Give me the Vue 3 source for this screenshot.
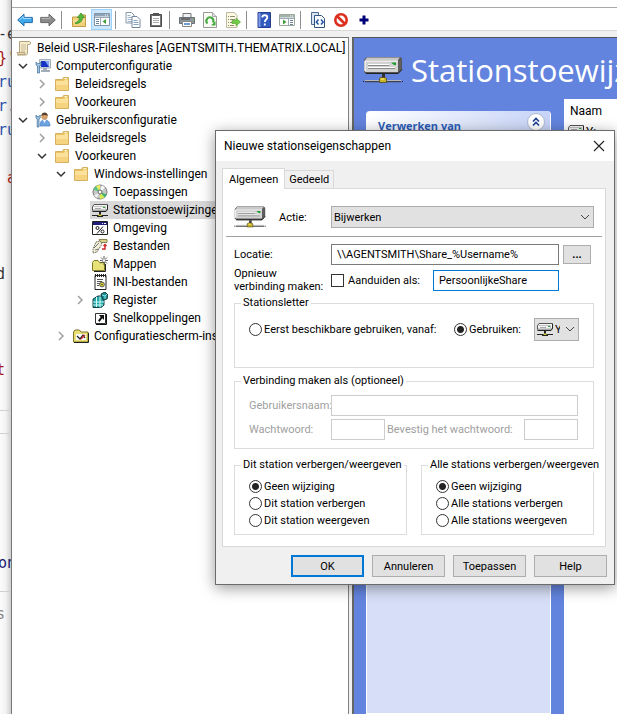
<script setup>
import { ref } from 'vue'

const codeTop = ['-e', "}'", 'ru', 'r.', 'ru', '', ' a', '', '', '', 'd', '', '', '', 't']
const codeTone = ['ink', 'red', 'blue', 'blue', 'blue', '', 'red', '', '', '', 'ink cut', '', '', '', 'red cut']

const tools = ref([
  { icon: 'back', label: 'Vorige' },
  { icon: 'forward', label: 'Volgende' },
  null,
  { icon: 'up', label: 'Niveau omhoog' },
  { icon: 'console', label: 'Consolestructuur', on: true },
  null,
  { icon: 'copy', label: 'Kopiëren' },
  { icon: 'paste', label: 'Plakken' },
  null,
  { icon: 'print', label: 'Afdrukken' },
  { icon: 'refresh', label: 'Vernieuwen' },
  { icon: 'export', label: 'Exporteren' },
  null,
  { icon: 'help', label: 'Help' },
  { icon: 'pane', label: 'Actievenster' },
  null,
  { icon: 'xml', label: 'XML weergeven' },
  { icon: 'ban', label: 'Uitschakelen' },
  { icon: 'plus', label: 'Toevoegen' }
])

const tree = [
  { level: 0, icon: 'scroll', text: 'Beleid USR-Fileshares [AGENTSMITH.THEMATRIX.LOCAL]' },
  { level: 1, icon: 'computer', text: 'Computerconfiguratie', state: 'open' },
  { level: 2, icon: 'folder', text: 'Beleidsregels', state: 'closed' },
  { level: 2, icon: 'folder', text: 'Voorkeuren', state: 'closed' },
  { level: 1, icon: 'user', text: 'Gebruikersconfiguratie', state: 'open' },
  { level: 2, icon: 'folder', text: 'Beleidsregels', state: 'closed' },
  { level: 2, icon: 'folder', text: 'Voorkeuren', state: 'open' },
  { level: 3, icon: 'folder', text: 'Windows-instellingen', state: 'open' },
  { level: 4, icon: 'disc', text: 'Toepassingen' },
  { level: 4, icon: 'drive', text: 'Stationstoewijzingen', selected: true },
  { level: 4, icon: 'env', text: 'Omgeving' },
  { level: 4, icon: 'files', text: 'Bestanden' },
  { level: 4, icon: 'newfolder', text: 'Mappen' },
  { level: 4, icon: 'ini', text: 'INI-bestanden' },
  { level: 4, icon: 'registry', text: 'Register', state: 'closed' },
  { level: 4, icon: 'shortcut', text: 'Snelkoppelingen' },
  { level: 3, icon: 'control', text: 'Configuratiescherm-instellingen', state: 'closed' }
]

const action = ref('Bijwerken')
const location = ref('\\\\AGENTSMITH\\Share_%Username%')
const shareLabel = ref('PersoonlijkeShare')
const reconnect = ref(false)
const letterMode = ref('use')
const letter = ref('Y')
const hideThis = ref('Geen wijziging')
const hideAll = ref('Geen wijziging')
const thisOptions = ['Geen wijziging', 'Dit station verbergen', 'Dit station weergeven']
const allOptions = ['Geen wijziging', 'Alle stations verbergen', 'Alle stations weergeven']
</script>

<template>
  <svg class="defs" aria-hidden="true">
    <symbol id="i-back" viewBox="0 0 16 16"><path d="M.7 8 7 2.200V5.400h8.300v5.200H7v3.200z" fill="#3fa9ec" stroke="#2269a8" /><path d="M2.500 7.800 6.200 4.400v2h8" fill="none" stroke="#a5ddff" /></symbol>
    <symbol id="i-forward" viewBox="0 0 16 16"><path d="M15.300 8 9 2.200v3.200H.7v5.200H9v3.200z" fill="#8b8b8b" stroke="#666" /><path d="M1.500 6.400h8.300v-2" fill="none" stroke="#bbb" /></symbol>
    <symbol id="i-up" viewBox="0 0 16 16"><path d="M1.500 5h8l1-2h4v11.500h-13z" fill="#f1d27c" stroke="#c29b45" /><path d="M2 9h12" stroke="#fbe9ae" /><path d="M4 11c3-1 4.500-3 4.500-5.500H6.300L10 1l3.700 4.500h-2.200c0 4-3 6-7 6z" fill="#56b83a" stroke="#2f8a25" stroke-width=".7" /></symbol>
    <symbol id="i-console" viewBox="0 0 16 16"><path d="M.5 1.500h15v12H.5z" fill="#fff" stroke="#8095a8" /><path d="M1 2h14v2.500H1z" fill="#8fa4b6" /><path d="M11 3h1m1 0h1" stroke="#fff" /><path d="M1 5.500h14M6.500 6v7" stroke="#9aaaba" /><path d="M2 7.500h3M2 9.500h3M2 11.500h3" stroke="#6d8496" /><path d="M12 7v5L8.500 9.500z" fill="#3d9d37" /></symbol>
    <symbol id="i-pane" viewBox="0 0 16 16"><path d="M.5 2.500h15v11H.5z" fill="#fff" stroke="#9aa89e" /><path d="M1 3h14v2.500H1z" fill="#a3b3ab" /><path d="M11 4h1m1 0h1" stroke="#fff" /><path d="M1 6.500h14M9.500 7v6" stroke="#9aaaba" /><path d="M11 8.500h3M11 10.500h3M11 12.500h3" stroke="#6d8496" /><path d="M4 7.500v5L7.500 10z" fill="#3d9d37" /></symbol>
    <symbol id="i-copy" viewBox="0 0 16 16"><path d="M1 .5h5.500l2.500 2.500v8H1z" fill="#fff" stroke="#8797a8" /><path d="M2.500 3.500h3M2.500 5.500h5M2.500 7.500h5M2.500 9.500h5" stroke="#9cb4cc" /><path d="M7 4.500h5l3 3v8H7z" fill="#fff" stroke="#7587a0" /><path d="M8.500 8.500h4M8.500 10.500h5M8.500 12.500h5" stroke="#7ca0c8" /></symbol>
    <symbol id="i-paste" viewBox="0 0 16 16"><path d="M2.500 2.500h11v12h-11z" fill="#777" stroke="#4c4c4c" /><path d="M4 4h8v9H4z" fill="#fff" /><path d="M5 1h6v3H5z" fill="#555" /><path d="M5 6.500h6M5 8.500h6M5 10.500h6" stroke="#aaa" /></symbol>
    <symbol id="i-print" viewBox="0 0 16 16"><path d="M4 1.500h8v5H4z" fill="#eef2f5" stroke="#777" /><path d="M.5 5.500h15v6H.5z" fill="#8e959b" stroke="#6b7075" /><path d="M2 7h9" stroke="#444" /><path d="M13 7.500h1" stroke="#61cf54" /><path d="M3.500 9.500h9v5h-9z" fill="#fff" stroke="#888" /><path d="M5 12h6" stroke="#6c9ed0" stroke-width="2" /></symbol>
    <symbol id="i-refresh" viewBox="0 0 16 16"><path d="M1.500.5h9l4 4v11h-13z" fill="#fcfcf7" stroke="#9b9b93" /><path d="M10.500.5v4h4" fill="#ddd" stroke="#aaa" /><path d="M5.500 11.500A3.500 3.500 0 1 1 11 10.500" fill="none" stroke="#43a93c" stroke-width="2" /><path d="M13.500 9v4.500H9z" fill="#43a93c" /></symbol>
    <symbol id="i-export" viewBox="0 0 16 16"><path d="M1.500.5h8l2.500 3v12H1.500z" fill="#fdf9e2" stroke="#bdb8a2" /><path d="M3 4.500h1m1 0h5M3 7.500h1m1 0h5M3 10.500h1m1 0h3M3 13.500h1m1 0h4" stroke="#8b8d72" /><path d="M7 8.500h4V6l4.500 4-4.500 4v-2.500H7z" fill="#72cc46" stroke="#4c9d2d" stroke-width=".6" /></symbol>
    <symbol id="i-help" viewBox="0 0 16 16"><path d="M2 .5h12.500v15H2z" fill="#3259bd" stroke="#243f91" /><path d="M2.500 1h2v14h-2z" fill="#7e9be4" /><path d="M6.300 5.500c0-3 5-3 5 0 0 2-2.500 2-2.500 4.500M8.800 11.500v2" fill="none" stroke="#fff" stroke-width="1.800" /></symbol>
    <symbol id="i-xml" viewBox="0 0 16 16"><path d="M1.500.5h7v12h-7z" fill="#d7e5f4" stroke="#4d6c91" /><path d="M4.500 3.500h7l3 3v9h-10z" fill="#f9fcff" stroke="#33557f" /><path d="M8.500 7.500 6.300 10l2.200 2.500M11 7.500l2.200 2.500-2.200 2.500" fill="none" stroke="#1c4fa0" stroke-width="1.400" /></symbol>
    <symbol id="i-ban" viewBox="0 0 16 16"><circle cx="8" cy="8" r="5.700" fill="#fff" stroke="#dc2f1e" stroke-width="2.600" /><path d="m4 4 8 8" stroke="#dc2f1e" stroke-width="2.600" /></symbol>
    <symbol id="i-plus" viewBox="0 0 16 16"><path d="M8 3.500v9M3.500 8h9" stroke="#00007b" stroke-width="3" /></symbol>
    <symbol id="i-scroll" viewBox="0 0 16 16"><path d="M3.500 1.500h10c1.500 0 1.500 3 0 3h-2v8.500c0 1.500-1 2-2 2h-8c1.500 0 2-1 2-2z" fill="#f5ecd0" stroke="#b5a27c" /><path d="M1 12.500h8v2H2z" fill="#e7d7aa" stroke="#a4916a" stroke-width=".7" /><path d="M5 5h5M5 7h5M5 9h5M5 11h4" stroke="#cbbb95" /></symbol>
    <symbol id="i-computer" viewBox="0 0 16 16"><path d="M4.500 1.500h11v8.500h-11z" fill="#d5dde7" stroke="#a3adba" /><path d="M6 3h8v6H6z" fill="#1934c4" /><path d="M10 3h4v6z" fill="#7fa4f1" /><path d="M8 10h4v2H8zM6 12h9v2H6z" fill="#a4adba" /><path d="M1 4v3l1.500 1v7h2V8L6 7V4L4.500 5.500h-2z" fill="#9fc2e2" stroke="#3e6d9b" stroke-width=".7" /></symbol>
    <symbol id="i-user" viewBox="0 0 16 16"><circle cx="9.500" cy="4.500" r="3.200" fill="#d9a06b" /><path d="M6.500 4c-.5-4 6-5 6.300 0-2-1-4-1.500-6.300 0z" fill="#54402d" /><path d="M5 14c0-5 2-6 4.500-6s5.500 1 5.500 6z" fill="#6ba2e0" stroke="#4a7fbb" stroke-width=".7" /><path d="M8 8h3l-1.500 3z" fill="#fff" /><path d="M1 3v3l1.200 1v8h1.800V7l1.200-1V3L4 4.500H2.200z" fill="#9fc2e2" stroke="#3e6d9b" stroke-width=".7" /></symbol>
    <symbol id="i-folder" viewBox="0 0 16 16"><path d="M1.500 3.500h7l1-2h5v13h-13z" fill="#e9c566" stroke="#d6b05f" /><path d="M2 5h8l1-1.500h3V14H2z" fill="#fbe19a" /><path d="M2 9h12v5H2z" fill="#f5d37f" /><path d="M10.500 2.500H13" stroke="#fff6d5" /></symbol>
    <symbol id="i-disc" viewBox="0 0 16 16"><circle cx="8" cy="8" r="7" fill="#c5c9c5" stroke="#777" /><path d="M8 8 4 2.300A7 7 0 0 1 8 1z" fill="#e7ef58" /><path d="M8 8 1.500 5.500A7 7 0 0 1 4 2.300z" fill="#56c784" /><path d="m8 8 4.500 5.300A7 7 0 0 1 8 15z" fill="#d9ec4c" /><path d="m8 8 6.500 2.500a7 7 0 0 1-2 2.800z" fill="#38b46b" /><path d="M8 8 10 1.300 13 3.500z" fill="#fff" /><path d="M8 8 4.500 14 2 11.500z" fill="#eee" /><circle cx="8" cy="8" r="2" fill="#fff" stroke="#666" /></symbol>
    <symbol id="i-drive" viewBox="0 0 16 16"><path d="M.5 4.500 2 2.500h13.500V7L14 8.500H.5z" fill="#f4f4f4" stroke="#555" /><path d="M1 7.500h13V9H1z" fill="#a9a9a9" /><path d="M1 4.500h12.500V8" fill="none" stroke="#c4c4c4" /><path d="M.5 9.500h13.500l1.500-2V3" fill="none" stroke="#222" /><path d="M3 6.500h6" stroke="#aaa" /><path d="M11 5.500h2" stroke="#24a238" /><path d="M8 10v3" stroke="#222" stroke-width="2" /><path d="M0 13.500h16" stroke="#222" /><path d="M5 14.500h6" stroke="#222" /><path d="M6.500 12.500h3v1.500h-3z" fill="#d6cc37" /></symbol>
    <symbol id="i-bigdrive" viewBox="0 0 40 28"><path d="M4 1h33l2 1.500v11L35 18H3l-2-2V4z" fill="#555" /><path d="M4 1.500h33l-2.500 3H2z" fill="#c9c9c9" /><path d="m38 2.500-3 2.500v11l3-3z" fill="#5f5f5f" /><path d="M1.500 4.500H35V16H2.500l-1-1z" fill="#d2d2d2" /><path d="M2 15V5h33" fill="none" stroke="#fff" /><path d="M5 8.500h21M5 11.500h27" stroke="#fff" /><path d="M5 9.500h21M5 12.500h27" stroke="#8a8a8a" /><path d="M3 17.500h32l4-4" fill="none" stroke="#222" /><path d="M28 6.500h5V9h-2z" fill="#1d9c2d" /><path d="M19 18h3v4h-3z" fill="#333" /><path d="M0 25.500h1m38 0h1" stroke="#222" /><path d="M2 24.500h36" stroke="#b8b8b8" /><path d="M2 25.700h36" stroke="#333" /><path d="M17.500 21.500h5l1 1v4h-7v-4z" fill="#c9b429" stroke="#473f18" stroke-width=".7" /><path d="M18 23h3" stroke="#fff17a" /></symbol>
    <symbol id="i-env" viewBox="0 0 16 16"><path d="M.5 1.500h15v13H.5z" fill="#fff" stroke="#222" /><path d="M1 2h14v3H1z" fill="#20207c" /><path d="M10 3.500h1m1 0h2" stroke="#fff" /><circle cx="5.500" cy="8" r="1.500" fill="none" stroke="#222" /><circle cx="10.500" cy="11.500" r="1.500" fill="none" stroke="#222" /><path d="m11 6.500-6 7" stroke="#222" /></symbol>
    <symbol id="i-files" viewBox="0 0 16 16"><path d="M7 1.500h8v3H9z" fill="#d6d18d" stroke="#8a8550" /><path d="m4 4 4-1 2 3-5 8-4 1v-4z" fill="#f1efd9" stroke="#6e6c51" stroke-dasharray="1.500 .7" /><path d="m2 10 5-5M3 12l4-1" stroke="#777" /><path d="M10 11h3V7m-1.500 1L13 6.500 14.500 8" fill="none" stroke="#d12626" stroke-width="1.400" /></symbol>
    <symbol id="i-newfolder" viewBox="0 0 16 16"><path d="M.5 14.500V6.500l1.500-2h4l1.500 2h5v8z" fill="#e6e278" stroke="#7e7a29" /><path d="M2 15.500h11.500V8" fill="none" stroke="#222" /><path d="M12 0v9M8 4.500h8M9 1.500l6 6M15 1.500l-6 6" stroke="#333" stroke-width=".8" /><circle cx="12" cy="4.500" r="1.300" fill="#fff" /></symbol>
    <symbol id="i-ini" viewBox="0 0 16 16"><path d="M3 1.500h11v14H3z" fill="#fff" stroke="#222" /><path d="M3 1.500h11" stroke="#222" stroke-width="3" stroke-dasharray="1 1" /><path d="M5 5.500h6M5 7.500h5M5 9.500h3M5 11.500h2" stroke="#555" /><circle cx="10" cy="10.500" r="2.400" fill="#e5d93c" stroke="#555" /><circle cx="10" cy="10.500" r=".8" fill="#333" /></symbol>
    <symbol id="i-registry" viewBox="0 0 16 16"><path d="m1 7 5-3h5l1 4v5l-3 2.500H1z" fill="#26a5a5" stroke="#123f46" /><path d="M1 10h11M1 13h10M4.500 5v10M8 4.500v11" stroke="#d1fafa" /><path d="m9 2 4-2 3 3-1 4-4 1z" fill="#178c91" stroke="#123f46" /><path d="m10 3 3 1 2-2M13 4v3" fill="none" stroke="#8de2e2" /></symbol>
    <symbol id="i-shortcut" viewBox="0 0 16 16"><path d="M3.500 3.500h10v10h-10z" fill="#fff" stroke="#333" /><path d="M4 14.500h10.500V4" fill="none" stroke="#111" /><path d="M7 5h5v5l-1.700-1.700L7.500 12 6 10.500 8.700 7z" fill="#111" /></symbol>
    <symbol id="i-control" viewBox="0 0 16 16"><path d="M.5 4 2 2h4.500L8 4h7v10H.5z" fill="#e9df75" stroke="#80762a" /><path d="M1 14.500h14.500V5" fill="none" stroke="#222" /><path d="M3 6h10v6H3z" fill="#fff" /><path d="m4 8 3 3 3-4 2 3" fill="none" stroke="#222" stroke-width="1.300" /><path d="m8 11 4-4" stroke="#d13333" stroke-width="1.500" /></symbol>
  </svg>

  <div class="desktop">
    <div class="editor" aria-hidden="true">
      <pre v-for="(line, i) in codeTop" :key="i" :class="codeTone[i]">{{ line }}</pre>
      <div class="cell first"></div>
      <div class="cell second"></div>
      <pre class="navy">on</pre>
      <div class="cell third"></div>
      <pre class="grey cut">s</pre>
    </div>

    <main class="window">
      <div class="menustrip"></div>
      <div class="toolbar" role="toolbar">
        <template v-for="(t, i) in tools" :key="i">
          <button v-if="t" type="button" :class="['tool', { on: t.on }]" :aria-label="t.label">
            <svg class="ico"><use :href="'#i-' + t.icon" /></svg>
          </button>
          <span v-else class="sep"></span>
        </template>
      </div>

      <div class="panes">
        <nav class="tree">
          <div v-for="(n, i) in tree" :key="i" :class="['node', 'level' + n.level]">
            <span v-if="n.level" class="twist">
              <svg v-if="n.state === 'open'" class="chev open" viewBox="0 0 10 10"><path d="m1 3 4 4 4-4" /></svg>
              <svg v-else-if="n.state === 'closed'" class="chev" viewBox="0 0 10 10"><path d="m3 1 4 4-4 4" /></svg>
            </span>
            <span :class="['item', { selected: n.selected }]">
              <svg class="ico"><use :href="'#i-' + n.icon" /></svg>
              <span>{{ n.text }}</span>
            </span>
          </div>
        </nav>

        <section class="detail">
          <header class="banner">
            <svg class="bannerico"><use href="#i-bigdrive" /></svg>
            <h1>Stationstoewijzingen</h1>
          </header>
          <div class="columns">
            <aside class="card">
              <div class="cardhead">
                <h2>Verwerken van</h2>
                <button type="button" class="fold" aria-label="Samenvouwen">
                  <svg viewBox="0 0 16 16"><path d="m5 7.500 3-3 3 3m-6 4 3-3 3 3" /></svg>
                </button>
              </div>
            </aside>
            <div class="list">
              <div class="listhead">Naam</div>
              <div class="listrow"><svg class="ico"><use href="#i-drive" /></svg>Y:</div>
            </div>
          </div>
        </section>
      </div>
    </main>

    <div class="dialog" role="dialog" aria-labelledby="dlg-title">
      <div class="titlebar">
        <span id="dlg-title">Nieuwe stationseigenschappen</span>
        <button type="button" class="close" aria-label="Sluiten">
          <svg viewBox="0 0 12 12"><path d="m1 1 10 10M11 1 1 11" /></svg>
        </button>
      </div>

      <form class="body" @submit.prevent>
        <div class="tabs" role="tablist">
          <button type="button" role="tab" class="tab active" aria-selected="true">Algemeen</button>
          <button type="button" role="tab" class="tab" aria-selected="false">Gedeeld</button>
        </div>

        <div class="sheet" role="tabpanel">
          <div class="row action">
            <svg class="driveico"><use href="#i-bigdrive" /></svg>
            <label for="action">Actie:</label>
            <span class="combo">
              <select id="action" v-model="action"><option>Bijwerken</option></select>
              <svg class="arrow" viewBox="0 0 10 10"><path d="m1 3 4 4 4-4" /></svg>
            </span>
          </div>
          <hr />
          <div class="row place">
            <label for="location" class="lead">Locatie:</label>
            <input id="location" v-model="location" type="text" class="box" />
            <button type="button" class="btn more" aria-label="Bladeren">...</button>
          </div>
          <div class="row share">
            <label for="reconnect" class="lead">Opnieuw<br />verbinding maken:</label>
            <input id="reconnect" v-model="reconnect" type="checkbox" class="check" />
            <label for="share" class="as">Aanduiden als:</label>
            <input id="share" v-model="shareLabel" type="text" class="box focus" />
          </div>

          <fieldset class="letter">
            <legend>Stationsletter</legend>
            <label class="opt"><input v-model="letterMode" type="radio" name="letter" value="first" />Eerst beschikbare gebruiken, vanaf:</label>
            <label class="opt"><input v-model="letterMode" type="radio" name="letter" value="use" />Gebruiken:</label>
            <span class="combo small">
              <svg class="ico inside"><use href="#i-drive" /></svg>
              <select v-model="letter" aria-label="Stationsletter"><option>Y</option></select>
              <svg class="arrow" viewBox="0 0 10 10"><path d="m1 3 4 4 4-4" /></svg>
            </span>
          </fieldset>

          <fieldset class="account" disabled>
            <legend>Verbinding maken als (optioneel)</legend>
            <label for="user">Gebruikersnaam:</label>
            <input id="user" type="text" class="box wide" />
            <label for="pw">Wachtwoord:</label>
            <input id="pw" type="password" class="box" />
            <label for="pw2" class="confirm">Bevestig het wachtwoord:</label>
            <input id="pw2" type="password" class="box" />
          </fieldset>

          <div class="pair">
            <fieldset class="hide">
              <legend>Dit station verbergen/weergeven</legend>
              <label v-for="o in thisOptions" :key="o" class="opt"><input v-model="hideThis" type="radio" name="this" :value="o" />{{ o }}</label>
            </fieldset>
            <fieldset class="hide">
              <legend>Alle stations verbergen/weergeven</legend>
              <label v-for="o in allOptions" :key="o" class="opt"><input v-model="hideAll" type="radio" name="all" :value="o" />{{ o }}</label>
            </fieldset>
          </div>
        </div>

        <div class="actions">
          <button type="submit" class="btn primary">OK</button>
          <button type="button" class="btn">Annuleren</button>
          <button type="button" class="btn">Toepassen</button>
          <button type="button" class="btn">Help</button>
        </div>
      </form>
    </div>
  </div>
</template>

<style>
body {
  margin: 0;
  overflow: hidden;
}
</style>

<style scoped>
* {
  box-sizing: border-box;
}
.defs {
  display: none;
}
.desktop {
  position: relative;
  display: grid;
  grid-template-columns: 11px minmax(0, 1fr);
  height: 100vh;
  overflow: hidden;
  font: 12px/18px Roboto, "Open Sans", sans-serif;
  color: #000;
}
.ico {
  display: block;
  flex: none;
  width: 16px;
  height: 16px;
}
button,
input,
select {
  font: inherit;
  color: inherit;
  margin: 0;
}

/* editor behind the window */
.editor {
  overflow: hidden;
  padding-top: 22px;
  background: linear-gradient(to right, #fbfbfb, #f3f3f3 50%, #cfcfcf);
}
.editor pre {
  height: 24px;
  margin: 0 0 0 -2px;
  font: 15px/24px "DejaVu Sans Mono", monospace;
}
.editor pre.cut {
  margin-left: -4px;
}
.ink { color: #333; }
.red { color: #a31515; }
.blue { color: #2b50a8; }
.navy { color: #1a1a70; }
.grey { color: #888; }
.cell {
  border-top: 1px solid #d0d0d0;
}
.first {
  height: 23px;
  margin-top: 28px;
}
.second {
  height: 118px;
}
.third {
  height: 11px;
  margin-top: 16px;
}

/* console window */
.window {
  display: flex;
  flex-direction: column;
  min-width: 0;
  border-left: 1px solid #777;
  background: #f0f0f0;
}
.menustrip {
  height: 8px;
  background: #fff;
  border-bottom: 1px solid #a8a8a8;
}
.toolbar {
  display: flex;
  align-items: center;
  gap: 2px;
  height: 23px;
  padding: 1px 0 0 2px;
  background: #fff;
  border-bottom: 1px solid #d8d8d8;
}
.tool {
  display: flex;
  align-items: center;
  justify-content: center;
  width: 21px;
  height: 21px;
  padding: 0;
  border: 1px solid transparent;
  background: none;
}
.tool.on {
  background: #cce6fb;
  border-color: #99d1ff;
}
.sep {
  width: 6px;
  height: 18px;
  background: linear-gradient(#8d8d8d, #8d8d8d) 1px 0 / 1px 100% no-repeat;
}
.panes {
  display: grid;
  grid-template-columns: 337px minmax(0, 1fr);
  gap: 3px;
  flex: 1;
  min-height: 0;
  margin-top: 6px;
}
.tree {
  overflow: hidden;
  padding-top: 1px;
  background: #fff;
  border-top: 1px solid #777;
  border-right: 1px solid #828282;
}
.node {
  display: flex;
  height: 18px;
  white-space: nowrap;
}
.level0 { padding-left: 2px; }
.level1 { padding-left: 2px; }
.level2 { padding-left: 21px; }
.level3 { padding-left: 40px; }
.level4 { padding-left: 59px; }
.twist {
  display: flex;
  align-items: center;
  width: 19px;
  padding-left: 4px;
  flex: none;
}
.chev {
  width: 10px;
  height: 10px;
  fill: none;
  stroke: #a0a0a0;
  stroke-width: 1.5;
}
.chev.open {
  stroke: #333;
}
.item {
  display: flex;
  align-items: center;
  gap: 5px;
  padding: 0 3px 0 2px;
}
.item.selected {
  background: #d9d9d9;
}

.detail {
  display: flex;
  flex-direction: column;
  min-width: 0;
  overflow: hidden;
  background: #6384de;
  border-top: 1px solid #555;
  border-left: 2px solid #666;
}
.banner {
  display: flex;
  align-items: center;
  gap: 8px;
  height: 61px;
  padding: 2px 0 0 9px;
  flex: none;
}
.bannerico {
  width: 40px;
  height: 28px;
  flex: none;
}
h1 {
  margin: 0;
  font: 31px/40px "Open Sans", sans-serif;
  color: #fff;
}
.columns {
  display: grid;
  grid-template-columns: 185px minmax(0, 1fr);
  gap: 13px;
  flex: 1;
  padding-left: 12px;
}
.card {
  margin-top: 12px;
  background: #d6dff7;
  border: 1px solid #fff;
  border-top: 0;
  border-radius: 4px 4px 0 0;
}
.cardhead {
  display: flex;
  align-items: center;
  justify-content: space-between;
  height: 25px;
  padding: 0 5px 3px 11px;
  border-radius: 4px 4px 0 0;
  background: linear-gradient(to right, #fff, #c6d3f7);
}
h2 {
  margin: 0;
  padding-top: 7px;
  font: bold 11px/16px "Open Sans", sans-serif;
  color: #2a5bb8;
}
.fold {
  display: flex;
  width: 18px;
  height: 18px;
  padding: 0;
  border: 1px solid #b0b8d0;
  border-radius: 50%;
  background: #fff;
}
.fold svg {
  width: 16px;
  height: 16px;
  fill: none;
  stroke: #1c3f94;
  stroke-width: 1.6;
}
.list {
  background: #fff;
}
.listhead {
  height: 24px;
  padding: 3px 6px;
}
.listrow {
  display: flex;
  gap: 2px;
  padding-left: 4px;
}

/* properties dialog */
.dialog {
  position: absolute;
  top: 130px;
  left: 215px;
  right: 2px;
  border: 1px solid #6b6b6b;
  background: #f0f0f0;
  box-shadow: 0 3px 14px rgba(0, 0, 0, 0.4);
}
.titlebar {
  display: flex;
  align-items: center;
  justify-content: space-between;
  height: 30px;
  padding: 0 9px 0 8px;
  background: #fff;
}
.close {
  display: flex;
  padding: 0;
  border: 0;
  background: none;
}
.close svg {
  width: 12px;
  height: 12px;
  fill: none;
  stroke: #222;
  stroke-width: 1.1;
}
.body {
  padding: 7px 8px 7px 6px;
  font: 11px/13px Roboto, "Noto Sans", sans-serif;
}
.tabs {
  display: flex;
  align-items: flex-end;
  height: 20px;
}
.tab {
  height: 18px;
  padding: 0 4px;
  border: 1px solid #d9d9d9;
  border-left: 0;
  border-bottom: 0;
  background: #f0f0f0;
  white-space: nowrap;
}
.tab.active {
  position: relative;
  height: 21px;
  margin-bottom: -1px;
  padding: 0 6px;
  border-left: 1px solid #d9d9d9;
  background: #fff;
}
.sheet {
  padding: 15px 11px 11px;
  border: 1px solid #d9d9d9;
  background: #fff;
}
.row {
  display: flex;
  align-items: center;
}
.action {
  height: 26px;
}
.driveico {
  width: 32px;
  height: 24px;
  margin-right: 13px;
}
.action label {
  width: 52px;
}
.combo {
  position: relative;
  display: flex;
  flex: 1;
}
.combo select {
  appearance: none;
  width: 100%;
  height: 22px;
  padding: 0 20px 0 2px;
  border: 1px solid #adadad;
  border-radius: 0;
  background: #e1e1e1;
}
.arrow {
  position: absolute;
  right: 4px;
  top: 6px;
  width: 10px;
  height: 10px;
  fill: none;
  stroke: #444;
  pointer-events: none;
}
hr {
  height: 1px;
  margin: 6px -8px 7px;
  border: 0;
  background: #a0a0a0;
}
.lead {
  width: 97px;
  flex: none;
  white-space: nowrap;
}
.box {
  min-width: 0;
  height: 21px;
  padding: 0 5px;
  border: 1px solid #7a7a7a;
  border-radius: 0;
  background: #fff;
}
.focus {
  border-color: #0078d7;
  outline: 0;
}
.place {
  padding-right: 3px;
}
.place .box {
  flex: 1;
}
.btn {
  height: 22px;
  padding: 0;
  border: 1px solid #adadad;
  border-radius: 0;
  background: #e1e1e1;
}
.more {
  width: 28px;
  height: 19px;
  margin-left: 4px;
  font-weight: bold;
}
.share {
  height: 26px;
  margin-top: 2px;
  padding-right: 35px;
}
.share .box {
  flex: 1;
}
.check,
.opt input {
  appearance: none;
  flex: none;
  width: 13px;
  height: 13px;
  border: 1px solid #333;
  background: #fff;
}
.as {
  width: 85px;
  margin-left: 4px;
  white-space: nowrap;
}
.opt {
  display: flex;
  align-items: center;
  gap: 2px;
  white-space: nowrap;
}
.opt input {
  border-radius: 50%;
}
.opt input:checked {
  background: radial-gradient(circle, #222 0 3px, #fff 4px);
}
fieldset {
  min-width: 0;
  margin: 0;
  border: 1px solid #dcdcdc;
}
legend {
  height: 14px;
  padding: 0 2px;
  line-height: 14px;
  white-space: nowrap;
}
.letter {
  display: grid;
  grid-template-columns: minmax(0, 205fr) minmax(0, 80fr) 45px;
  align-items: center;
  margin-top: 3px;
  padding: 8px 14px 26px;
}
.letter legend,
.account legend,
.hide legend {
  margin-left: -8px;
}
.small select {
  height: 23px;
  padding: 0 18px 0 20px;
}
.inside {
  position: absolute;
  left: 3px;
  top: 3px;
  pointer-events: none;
}
.account {
  display: grid;
  grid-template-columns: 82px 54px minmax(0, 1fr) 54px;
  align-items: center;
  row-gap: 3px;
  margin-top: 6px;
  padding: 7px 15px 8px 14px;
  color: #a0a0a0;
}
.account legend {
  color: #000;
}
.account .box {
  border-color: #ccc;
}
.account .wide {
  grid-column: span 3;
}
.confirm {
  padding-left: 2px;
  white-space: nowrap;
}
.pair {
  display: grid;
  grid-template-columns: 1fr 1fr;
  gap: 14px;
  margin-top: 9px;
}
.hide {
  padding: 6px 14px 5px;
}
.hide .opt {
  height: 17px;
}
.actions {
  display: grid;
  grid-template-columns: repeat(4, 73px);
  justify-content: end;
  gap: 8px;
  margin: 8px -1px 0 0;
}
.primary {
  border: 2px solid #0078d7;
}
</style>
